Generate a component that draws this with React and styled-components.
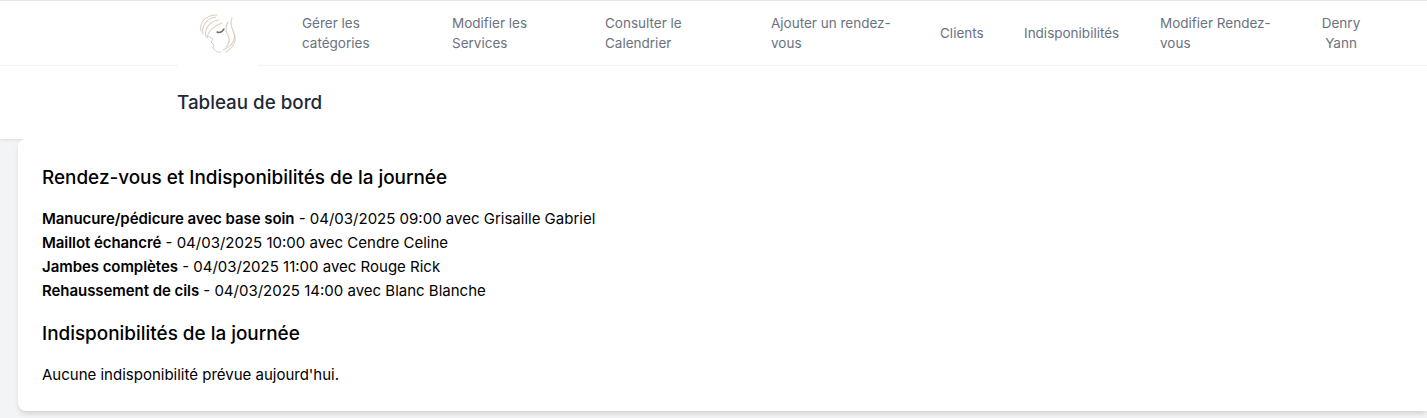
import styled, { createGlobalStyle } from "styled-components";

const GlobalStyle = createGlobalStyle`
  html, body {
    margin: 0;
    padding: 0;
    background: #f3f4f6;
    font-family: "Inter", "Noto Sans", sans-serif;
  }
`;

const navLinks = [
  { label: "Gérer les catégories", width: 150, text: 80 },
  { label: "Modifier les Services", width: 153, text: 90 },
  { label: "Consulter le Calendrier", width: 166, text: 90 },
  { label: "Ajouter un rendez-vous", width: 169, text: 130 },
  { label: "Clients", width: 84, text: 60 },
  { label: "Indisponibilités", width: 136, text: 110 },
  { label: "Modifier Rendez-vous", width: 142, text: 125 },
];

const appointments = [
  { service: "Manucure/pédicure avec base soin", detail: "04/03/2025 09:00 avec Grisaille Gabriel" },
  { service: "Maillot échancré", detail: "04/03/2025 10:00 avec Cendre Celine" },
  { service: "Jambes complètes", detail: "04/03/2025 11:00 avec Rouge Rick" },
  { service: "Rehaussement de cils", detail: "04/03/2025 14:00 avec Blanc Blanche" },
];

const Logo = () => (
  <svg width="44" height="44" viewBox="0 0 44 44" fill="none" strokeLinecap="round">
    <g stroke="#dccfbe" strokeWidth="1.1">
      <path d="M5 19C3 11 9 3 21 3" />
      <path d="M7 22C5 14 11 6 20 5" />
      <path d="M10 25C8 17 13 9 23 8" />
      <path d="M11 26C12 19 18 14 26 11" />
      <path d="M36 6C34 10 35 14 37 19C40 25 39 33 27 38" />
      <path d="M32 10C30 14 29 17 31 21C34 26 34 31 30 35" />
      <path d="M38 21C41 28 38 35 30 40" />
    </g>
    <g stroke="#cfc8bd" strokeWidth="0.9">
      <path d="M12 24L17 27L15 30L18 33L17 36C19 39 22 41 25 40" />
    </g>
    <path d="M21 20C23 21 26 20 28 17" stroke="#77716a" strokeWidth="1.4" />
  </svg>
);

const App = () => {
  return (
    <>
      <GlobalStyle />
      <Header>
        <Nav>
          <LogoBox>
            <Logo />
          </LogoBox>
          <NavList>
            {navLinks.map((link) => (
              <NavItem key={link.label} $width={link.width}>
                <NavLink $width={link.text}>{link.label}</NavLink>
              </NavItem>
            ))}
            <UserName>
              Denry
              <br />
              Yann
            </UserName>
          </NavList>
        </Nav>
        <TitleBar>
          <Title>Tableau de bord</Title>
        </TitleBar>
      </Header>
      <Main>
        <Card>
          <SectionTitle>Rendez-vous et Indisponibilités de la journée</SectionTitle>
          <List>
            {appointments.map((a) => (
              <li key={a.service}>
                <Service>{a.service}</Service> - {a.detail}
              </li>
            ))}
          </List>
          <SectionTitle>Indisponibilités de la journée</SectionTitle>
          <Empty>Aucune indisponibilité prévue aujourd'hui.</Empty>
        </Card>
      </Main>
    </>
  );
};
export default App;

const Header = styled.header`
  background: #fff;
  border-top: 1px solid #e5e7eb;
  box-shadow: 0 1px 3px rgba(0, 0, 0, 0.1);
`;

const Nav = styled.nav`
  height: 64px;
  display: flex;
  padding-left: 178px;
  border-bottom: 1px solid #f3f4f6;
`;

const LogoBox = styled.div`
  width: 80px;
  height: 70px;
  flex: none;
  background: #fff;
  display: flex;
  justify-content: center;
  padding-top: 11px;
  box-sizing: border-box;
  z-index: 1;
`;

const NavList = styled.div`
  display: flex;
  align-items: center;
  padding-left: 44px;
  font-size: 13.5px;
  line-height: 20px;
  color: #6b7280;
`;

const NavItem = styled.div`
  width: ${(p) => p.$width}px;
  flex: none;
`;

const NavLink = styled.a`
  display: block;
  width: ${(p) => p.$width}px;
`;

const UserName = styled.div`
  width: 78px;
  flex: none;
  text-align: center;
`;

const TitleBar = styled.div`
  height: 73px;
  display: flex;
  align-items: center;
  padding-left: 177px;
`;

const Title = styled.h1`
  margin: 0;
  font-size: 18.8px;
  font-weight: 500;
  line-height: 28px;
  color: #1f2937;
`;

const Main = styled.main`
  padding: 0 0 7px 18px;
`;

const Card = styled.section`
  position: relative;
  background: #fff;
  border-radius: 8px 0 0 8px;
  box-shadow: 0 4px 6px -1px rgba(0, 0, 0, 0.1), 0 2px 4px -2px rgba(0, 0, 0, 0.1);
  padding: 24px;
  height: 272px;
  box-sizing: border-box;
  color: #000;
`;

const SectionTitle = styled.h2`
  margin: 1px 0 15px;
  font-size: 18.9px;
  font-weight: 500;
  line-height: 28px;
`;

const List = styled.ul`
  margin: 0 0 17px;
  padding: 0;
  list-style: none;
  font-size: 15px;
  line-height: 24px;
`;

const Service = styled.strong`
  font-weight: 600;
  letter-spacing: -0.06px;
`;

const Empty = styled.p`
  margin: 0;
  font-size: 15px;
  line-height: 24px;
`;
